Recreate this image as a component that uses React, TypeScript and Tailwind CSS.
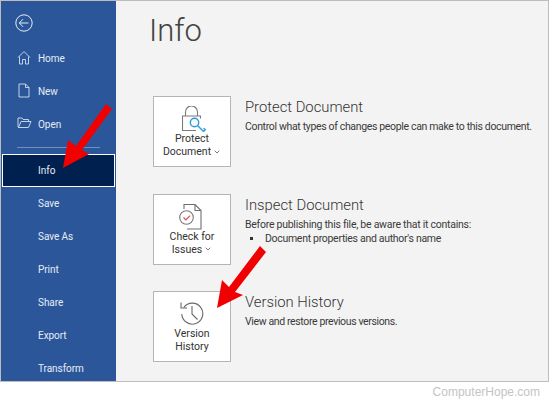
import React from "react"
import { ChevronDown } from "lucide-react"

const font = { fontFamily: 'Roboto, "Open Sans", sans-serif' }

function NavItem({ label, icon }: { label: string; icon?: React.ReactNode }) {
  return (
    <div className="relative flex h-[33px] items-center pl-[37px] text-[10px] tracking-[-0.05px] text-[#e6ecf5]">
      {icon && <span className="absolute left-[16px] top-[8px]">{icon}</span>}
      {label}
    </div>
  )
}

function LockIcon() {
  return (
    <svg width="24" height="26" viewBox="0 0 24 26" fill="none" className="ml-[3px]">
      <path d="M3.5 10V6a6 6 0 0 1 12 0v4" stroke="#7a7a7a" strokeWidth="1.1" />
      <path d="M14 24.500H.5V10h18v2.500" stroke="#7a7a7a" strokeWidth="1.1" />
      <circle cx="12.500" cy="16.500" r="4.200" fill="#f5fafd" stroke="#2e9bd6" strokeWidth="1.4" />
      <path d="M15.500 19.500l6 6 1.800-1.800-1.800-1.500" stroke="#2e9bd6" strokeWidth="1.4" />
    </svg>
  )
}

function CheckDocIcon() {
  return (
    <svg width="24" height="26" viewBox="0 0 24 26" fill="none" className="mr-[3px]">
      <path d="M5 5V.5h11l6 6v18.500H8" stroke="#6f6f6f" strokeWidth="1.1" />
      <path d="M16 .5v6h6" stroke="#6f6f6f" strokeWidth="1.1" />
      <circle cx="7.500" cy="13.500" r="6.800" fill="#fff" stroke="#7a7a7a" strokeWidth="1.1" />
      <path d="M4.500 13.500l2.400 2.400 4.200-4.200" stroke="#e2484f" strokeWidth="1.2" />
    </svg>
  )
}

function HistoryIcon() {
  return (
    <svg width="24" height="25" viewBox="0 0 24 25" fill="none">
      <path d="M3.800 6.500a10.500 10.500 0 1 1-2 6.500" stroke="#6a6a6a" strokeWidth="1.1" />
      <path d="M1 1.500v5.500h6" stroke="#6a6a6a" strokeWidth="1.1" />
      <path d="M12 5v8l5.500 5.500" stroke="#6a6a6a" strokeWidth="1.1" />
    </svg>
  )
}

function InfoRow({
  icon,
  lines,
  chevron,
  title,
  children,
}: {
  icon: React.ReactNode
  lines: string[]
  chevron?: boolean
  title: string
  children: React.ReactNode
}) {
  return (
    <div className="flex h-[97.5px] items-start">
      <div className="flex h-[71px] w-[78px] shrink-0 flex-col items-center border border-[#b5b5b5] bg-white text-[10.5px] leading-[13px] text-[#333]">
        <div className="flex h-[35px] justify-center pt-[9px]">{icon}</div>
        <div className="text-center">
          <div>{lines[0]}</div>
          <div className="flex items-center justify-center gap-[2px]">
            {lines[1]}
            {chevron && <ChevronDown size={8} strokeWidth={2} />}
          </div>
        </div>
      </div>
      <div className="ml-[14px] whitespace-nowrap pt-[1px]">
        <div className="text-[14.8px] font-light leading-[20px] text-[#333]">{title}</div>
        <div className="mt-[3px] text-[10.5px] leading-[14px] text-[#3a3a3a]">{children}</div>
      </div>
    </div>
  )
}

export default function App() {
  return (
    <div className="relative h-[402px] w-[549px] overflow-hidden bg-white" style={font}>
      <div className="flex h-[382px] w-[549px] border-x border-y border-[#bdbdbd] bg-[#f3f3f3]">
        <aside className="w-[115px] shrink-0 bg-[#2b579a]">
          <div className="px-[14px] pt-[13px]">
            <svg width="18" height="18" viewBox="0 0 18 18" fill="none" stroke="#e6ecf5" strokeWidth="1">
              <circle cx="9" cy="9" r="8.2" />
              <path d="M13.5 9h-9M8 5.2L4.3 9 8 12.8" />
            </svg>
          </div>
          <div className="mt-[10px]">
            <NavItem
              label="Home"
              icon={
                <svg width="14" height="15" viewBox="0 0 14 15" fill="none" stroke="#c4d2e6" strokeWidth="1">
                  <path d="M1 7.5L7 1.5l6 6M2.5 6.5v7.5h3v-4.5h3V14h3V6.5" />
                </svg>
              }
            />
            <NavItem
              label="New"
              icon={
                <svg width="12" height="15" viewBox="0 0 12 15" fill="none" stroke="#c4d2e6" strokeWidth="1" className="ml-[1px]">
                  <path d="M1 1h6.5L11 4.5V14H1zM7.5 1v3.5H11" />
                </svg>
              }
            />
            <NavItem
              label="Open"
              icon={
                <svg width="15" height="13" viewBox="0 0 15 13" fill="none" stroke="#c4d2e6" strokeWidth="1">
                  <path d="M1 11V2h4l1 1.5h5.500V5.500M1 11.500h10.500l2.500-6H4L1.500 11.500" />
                </svg>
              }
            />
          </div>
          <div className="ml-[16px] mt-[6px] h-px w-[83px] bg-[#6f8fc0]" />
          <div className="mx-[1px] mt-[6px] flex h-[33px] items-center border border-white bg-[#002050] pl-[35px] text-[10px] text-[#e6ecf5]">
            Info
          </div>
          <div>
            {["Save", "Save As", "Print", "Share", "Export", "Transform"].map((s) => (
              <NavItem key={s} label={s} />
            ))}
          </div>
        </aside>
        <main className="min-w-0 flex-1 pl-[37px]">
          <h1 className="ml-[-4px] h-[95px] pt-[5px] text-[31px] font-light leading-[50px] text-[#444]">Info</h1>
          <InfoRow icon={<LockIcon />} lines={["Protect", "Document"]} chevron title="Protect Document">
            <span className="tracking-[-0.34px]">Control what types of changes people can make to this document.</span>
          </InfoRow>
          <InfoRow icon={<CheckDocIcon />} lines={["Check for", "Issues"]} chevron title="Inspect Document">
            <div className="tracking-[-0.26px]">Before publishing this file, be aware that it contains:</div>
            <div className="flex items-center tracking-[-0.3px]">
              <span className="ml-[5px] mr-[12px] h-[3px] w-[3px] bg-[#333]" />
              Document properties and author's name
            </div>
          </InfoRow>
          <InfoRow icon={<HistoryIcon />} lines={["Version", "History"]} title="Version History">
            <span className="tracking-[-0.37px]">View and restore previous versions.</span>
          </InfoRow>
        </main>
      </div>
      <div className="pr-[9px] pt-[2px] text-right text-[12px] leading-[16px] text-[#c4c4c4]" style={{ fontFamily: '"Liberation Sans", Arial, sans-serif' }}>
        ComputerHope.com
      </div>
      {/* red annotation arrows on top of the window */}
      <svg className="absolute left-0 top-0" width="549" height="402" viewBox="0 0 549 402">
        <polygon points="106,104 112,109 82,150 89,154 63,168 68,140 76,146" fill="#f00000" />
        <polygon points="260,246 266,252 235,292 243,295 217,308 222,280 229,287" fill="#f00000" />
      </svg>
    </div>
  )
}
